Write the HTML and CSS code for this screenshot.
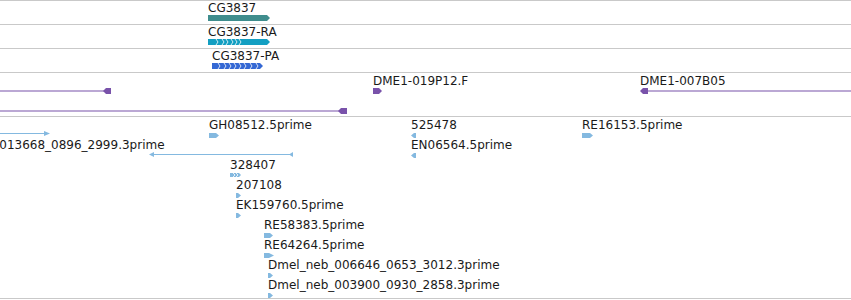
FILE: index.html
```html
<!DOCTYPE html>
<html lang="en">
<head>
    <meta charset="UTF-8">
    <title>CG3837 region</title>
    <link rel="stylesheet" href="styles.css">
</head>
<body>
    <!-- gene -->
    <div class="track track-genes">
        <div class="feat" style="left:208px;top:0">
            <div class="label">CG3837</div>
            <svg class="glyph gene" width="63" height="6"><polygon points="0,0 59,0 62,3 59,6 0,6"/></svg>
        </div>
    </div>

    <!-- transcript -->
    <div class="track track-genes">
        <div class="feat" style="left:208px;top:0">
            <div class="label">CG3837-RA</div>
            <svg class="glyph mrna" width="62" height="6">
                <polygon points="0,0 59,0 62,3 59,6 0,6"/>
                <polyline class="notch" points="8,0 10,3 8,6"/>
                <polyline class="notch" points="14,0 16,3 14,6"/>
                <polyline class="notch" points="18,0 20,3 18,6"/>
                <polyline class="notch" points="23,0 25,3 23,6"/>
                <polyline class="notch" points="27,0 29,3 27,6"/>
                <polyline class="notch" points="31,0 33,3 31,6"/>
            </svg>
        </div>
    </div>

    <!-- protein -->
    <div class="track track-genes">
        <div class="feat" style="left:212px;top:0">
            <div class="label">CG3837-PA</div>
            <svg class="glyph cds" width="51" height="6">
                <polygon points="0,0 48,0 51,3 48,6 0,6"/>
                <polyline class="notch" points="6,0 8,3 6,6"/>
                <polyline class="notch" points="12,0 14,3 12,6"/>
                <polyline class="notch" points="17,0 19,3 17,6"/>
                <polyline class="notch" points="22,0 24,3 22,6"/>
                <polyline class="notch" points="27,0 29,3 27,6"/>
                <polyline class="notch" points="32,0 34,3 32,6"/>
                <polyline class="notch" points="38,0 40,3 38,6"/>
                <polyline class="notch" points="44,0 46,3 44,6"/>
            </svg>
        </div>
    </div>

    <!-- clones -->
    <div class="track track-clones">
        <svg class="bare clone" style="left:0;top:15px" width="112" height="6">
            <line x1="0" y1="3" x2="106" y2="3"/>
            <polygon points="103,3 106,0 111,0 111,6 106,6"/>
        </svg>
        <svg class="bare clone" style="left:0;top:35px" width="348" height="6">
            <line x1="0" y1="3" x2="342" y2="3"/>
            <polygon points="338,3 341,0 347,0 347,6 341,6"/>
        </svg>
        <div class="feat" style="left:373px;top:1px">
            <div class="label">DME1-019P12.F</div>
            <svg class="glyph clone" width="9" height="6"><polygon points="0,0 6,0 9,3 6,6 0,6"/></svg>
        </div>
        <div class="feat" style="left:640px;top:1px">
            <div class="label">DME1-007B05</div>
            <svg class="glyph clone" width="211" height="6">
                <polygon points="0,3 3,0 8,0 8,6 3,6"/>
                <line x1="8" y1="3" x2="211" y2="3"/>
            </svg>
        </div>
    </div>

    <!-- ESTs -->
    <div class="track track-ests">
        <svg class="bare est" style="left:0;top:14px" width="50" height="5">
            <line x1="0" y1="2.5" x2="46" y2="2.5"/>
            <polygon points="44,0 50,2.5 44,5"/>
        </svg>
        <div class="label bare" style="left:-67px;top:21px">Dmel_neb_013668_0896_2999.3prime</div>
        <svg class="bare est" style="left:149px;top:35px" width="145" height="5">
            <polygon points="0,2.5 5,0 5,5"/>
            <line x1="4" y1="2.5" x2="144" y2="2.5"/>
            <polygon points="140,2.5 144,0 144,5"/>
        </svg>

        <div class="feat" style="left:209px;top:1px">
            <div class="label">GH08512.5prime</div>
            <svg class="glyph est" width="10" height="5"><polygon points="0,0 7,0 10,2.5 7,5 0,5"/></svg>
        </div>
        <div class="feat" style="left:411px;top:1px">
            <div class="label">525478</div>
            <svg class="glyph est" width="5" height="5"><polygon points="0,2.5 3,0 5,0 5,5 3,5"/></svg>
        </div>
        <div class="feat" style="left:411px;top:21px">
            <div class="label">EN06564.5prime</div>
            <svg class="glyph est" width="5" height="5"><polygon points="0,2.5 3,0 5,0 5,5 3,5"/></svg>
        </div>
        <div class="feat" style="left:582px;top:1px">
            <div class="label">RE16153.5prime</div>
            <svg class="glyph est" width="11" height="5"><polygon points="0,0 8,0 11,2.5 8,5 0,5"/></svg>
        </div>
        <div class="feat" style="left:230px;top:41px">
            <div class="label">328407</div>
            <svg class="glyph est" width="11" height="4">
                <polygon points="0,0 9,0 11,2 9,4 0,4"/>
                <polyline class="notch" points="3,0 5,2 3,4"/>
                <polyline class="notch" points="6,0 8,2 6,4"/>
            </svg>
        </div>
        <div class="feat" style="left:236px;top:61px">
            <div class="label">207108</div>
            <svg class="glyph est" width="5" height="5"><polygon points="0,0 2,0 5,2.5 2,5 0,5"/></svg>
        </div>
        <div class="feat" style="left:236px;top:81px">
            <div class="label">EK159760.5prime</div>
            <svg class="glyph est" width="5" height="5"><polygon points="0,0 2,0 5,2.5 2,5 0,5"/></svg>
        </div>
        <div class="feat" style="left:264px;top:101px">
            <div class="label">RE58383.5prime</div>
            <svg class="glyph est" width="9" height="5"><polygon points="0,0 6,0 9,2.5 6,5 0,5"/></svg>
        </div>
        <div class="feat" style="left:264px;top:121px">
            <div class="label">RE64264.5prime</div>
            <svg class="glyph est" width="10" height="5"><polygon points="0,0 5,0 10,2.5 5,5 0,5"/></svg>
        </div>
        <div class="feat" style="left:268px;top:141px">
            <div class="label">Dmel_neb_006646_0653_3012.3prime</div>
            <svg class="glyph est" width="5" height="5"><polygon points="0,0 2,0 5,2.5 2,5 0,5"/></svg>
        </div>
        <div class="feat" style="left:268px;top:161px">
            <div class="label">Dmel_neb_003900_0930_2858.3prime</div>
            <svg class="glyph est" width="5" height="5"><polygon points="0,0 2,0 5,2.5 2,5 0,5"/></svg>
        </div>
    </div>
</body>
</html>
```

FILE: styles.css
```css
html,
body {
    margin: 0;
    padding: 0;
    width: 851px;
    height: 300px;
    overflow: hidden;
    background: #fff;
}

body {
    font-family: "DejaVu Sans", sans-serif;
    font-size: 12px;
    color: #1a1a1a;
}

.track {
    position: relative;
    height: 23px;
    border-top: 1px solid #c9c9c9;
}

.track-clones {
    height: 43px;
}

.track-ests {
    height: 181px;
    border-bottom: 1px solid #c9c9c9;
}

.feat {
    position: absolute;
    display: flex;
    flex-direction: column;
    align-items: flex-start;
}

.label {
    line-height: 14px;
    white-space: nowrap;
}

.glyph {
    display: block;
    margin-top: 1px;
    overflow: visible;
}

.track-genes .glyph,
.track-clones .glyph {
    margin-top: 0;
}

.bare {
    position: absolute;
    display: block;
}

/* feature colours */
.gene { fill: #3f8d8d; }
.mrna { fill: #139fc2; }
.cds { fill: #3468d4; }

/* white chevrons between exon blocks */
.notch {
    fill: none;
    stroke: #fff;
    stroke-width: 0.8;
}

.clone { fill: #7952aa; stroke: #7952aa; stroke-width: 1.2; }
.clone polygon { stroke: none; }

.est { fill: #84b9e0; stroke: #84b9e0; stroke-width: 1; }
.est polygon { stroke: none; }
.est .notch { fill: none; stroke: #fff; stroke-width: 0.8; }
```
